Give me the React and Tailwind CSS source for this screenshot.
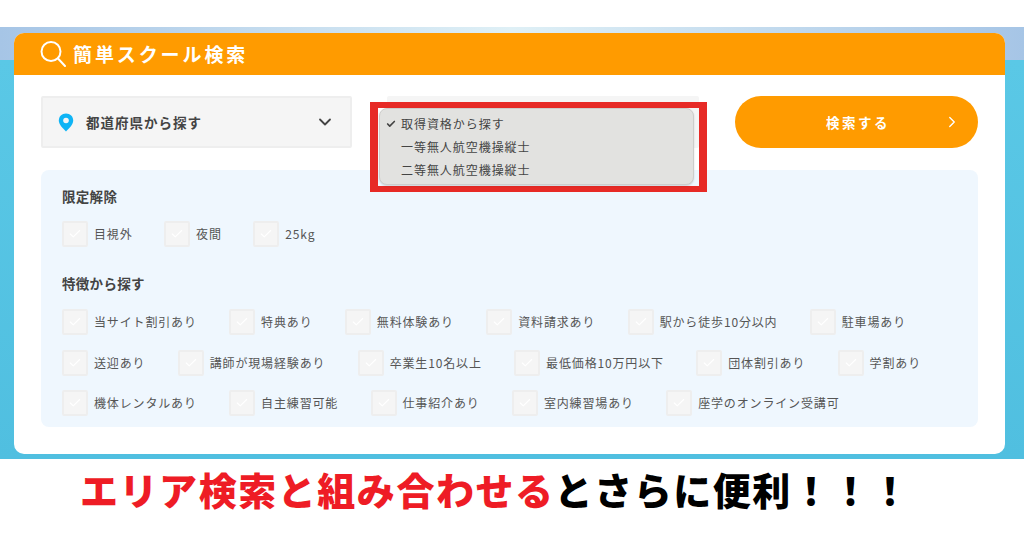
import { ChevronDown, ChevronRight, Check } from 'lucide-react';

const LIMITS = ['目視外', '夜間', '25kg'];

const FEATURE_ROWS = [
  ['当サイト割引あり', '特典あり', '無料体験あり', '資料請求あり', '駅から徒歩10分以内', '駐車場あり'],
  ['送迎あり', '講師が現場経験あり', '卒業生10名以上', '最低価格10万円以下', '団体割引あり', '学割あり'],
  ['機体レンタルあり', '自主練習可能', '仕事紹介あり', '室内練習場あり', '座学のオンライン受講可'],
];

const CheckItem = ({ label, compact }) => (
  <label className={'flex items-center gap-[6px] ' + (compact ? 'mr-[31.5px]' : 'mr-[32.3px]')}>
    <span className="flex items-center justify-center w-[26px] h-[26px] bg-[#f5f5f5] border-2 border-[#eeeeee] rounded-[2px]">
      <Check className="w-[14px] h-[14px] text-white" strokeWidth={2} />
    </span>
    <span className="text-[12px] tracking-[0.85px] text-[#555555] whitespace-nowrap">{label}</span>
  </label>
);

const App = () => {
  return (
    <div className="w-[1024px] h-[538px] bg-white overflow-hidden font-['Noto_Sans_CJK_JP','Noto_Sans',sans-serif]">
      <div className="mt-[27px] pt-[6px] pb-[5px] px-[14px] bg-[linear-gradient(to_bottom,transparent_33px,#5ac8e6_33px,#50bfe0_100%),linear-gradient(to_right,#a6c5e6,#dff0f6_50%,#a6c5e6)]">
        <div className="w-[991px] h-[421px] bg-white rounded-[10px] overflow-hidden">
          <div className="h-[42px] bg-[#ff9b00] flex items-center pl-[26px] text-white">
            <svg width="26" height="26" viewBox="0 0 26 26" fill="none" stroke="currentColor" strokeWidth="2" strokeLinecap="round">
              <circle cx="11" cy="10.5" r="9.5" />
              <path d="M18 17.5l7 7.5" />
            </svg>
            <span className="ml-[7px] text-[19px] font-bold tracking-[2.9px]">簡単スクール検索</span>
          </div>

          <div className="px-[27px] pt-[21px]">
            <div className="flex items-center">
              <div className="w-[311px] h-[52px] flex items-center bg-[#f5f5f5] border-2 border-[#eeeeee] rounded-[2px] pl-[15px] pr-[15px]">
                <svg width="16" height="19" viewBox="0 0 16 19">
                  <path d="M8 0.5C3.8 0.5 0.8 3.6 0.8 7.6C0.8 11.6 5 15.8 8 18.5C11 15.8 15.2 11.6 15.2 7.6C15.2 3.6 12.2 0.5 8 0.5Z" fill="#0fb4f5" />
                  <circle cx="8" cy="7.5" r="2.8" fill="#f5f5f5" />
                </svg>
                <span className="ml-[12px] text-[13.5px] font-bold tracking-[1px] text-[#444444]">都道府県から探す</span>
                <ChevronDown className="w-[20px] h-[20px] ml-auto text-[#444444]" strokeWidth={2.2} />
              </div>
              <div className="relative w-[312px] h-[52px] ml-[35px] bg-[#f5f5f5] rounded-[2px]">
                {/* open select menu with the red highlight frame over it */}
                <div className="absolute left-[-17px] top-[6px] w-[337px] h-[90px] border-x-[8px] border-y-[6px] border-[#e72a26]">
                  <div className="ml-[1px] w-[315px] h-[77px] bg-[#e2e2e0] border border-[#cdcdcb] rounded-[8px] shadow-[0_1px_2px_rgba(0,0,0,0.15)] pt-[3px] text-[12px] tracking-[0.95px] text-[#444444] leading-[23px]">
                    <div className="flex items-center pl-[6px]">
                      <Check className="w-[10px] h-[10px] mr-[5px]" strokeWidth={4} />
                      取得資格から探す
                    </div>
                    <div className="pl-[21px]">一等無人航空機操縦士</div>
                    <div className="pl-[21px]">二等無人航空機操縦士</div>
                  </div>
                </div>
              </div>
              <div className="relative w-[243px] h-[52px] ml-[36px] bg-[#ff9b00] rounded-[26px] flex items-center justify-center text-white">
                <span className="text-[13.5px] font-bold tracking-[2.5px] ml-[3px]">検索する</span>
                <ChevronRight className="absolute right-[17px] w-[18px] h-[18px]" strokeWidth={1.8} />
              </div>
            </div>

            <div className="mt-[22px] h-[257px] bg-[#eff7fe] rounded-[8px] pt-[16px] pl-[21px]">
              <div className="text-[13.5px] leading-[20px] font-bold tracking-[0.3px] text-[#444444]">限定解除</div>
              <div className="flex mt-[15px]">
                {LIMITS.map((label) => <CheckItem key={label} label={label} compact />)}
              </div>
              <div className="mt-[26px] text-[13.5px] leading-[20px] font-bold tracking-[0.3px] text-[#444444]">特徴から探す</div>
              <div className="flex flex-col gap-[14.5px] mt-[16px]">
                {FEATURE_ROWS.map((row, i) => (
                  <div key={i} className="flex">
                    {row.map((label) => <CheckItem key={label} label={label} />)}
                  </div>
                ))}
              </div>
            </div>
          </div>
        </div>
      </div>

      <div className="mt-[5px] pl-[80px] text-[38px] leading-[50px] font-black tracking-[1.55px] whitespace-nowrap text-black">
        <span className="text-[#ee1c25]">エリア検索と組み合わせる</span>とさらに便利！！！
      </div>
    </div>
  );
};

export default App;
